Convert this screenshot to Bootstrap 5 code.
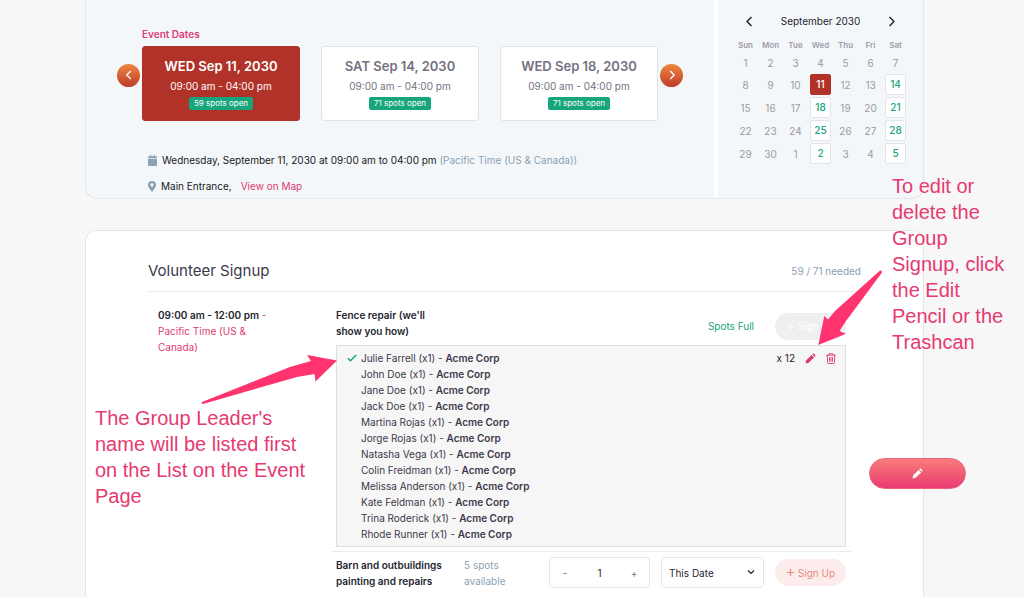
<!DOCTYPE html>
<html lang="en">
<head>
<meta charset="utf-8">
<meta name="viewport" content="width=device-width, initial-scale=1">
<title>Volunteer Signup</title>
<link href="https://cdn.jsdelivr.net/npm/bootstrap@5.3.0/dist/css/bootstrap.min.css" rel="stylesheet">
<style>
  :root { --pink: #dc3a72; --note: #e63a70; --brick: #b03228; --green: #17a57b; --slate: #8aa1b4; --ink: #24252f; --plum: #3c3849; --rule: #e4e7e9; }
  body { background: #f7f7f7; color: var(--ink); font-family: Inter, "Liberation Sans", sans-serif; font-size: 10px; line-height: 16px; }
  a { color: var(--pink); text-decoration: none; }
  button, select, input { font-family: inherit; font-size: 10px; }
  svg { display: block; }
  .page { min-height: 100vh; padding: 0 100px 0 85px; overflow: hidden; }
  .panel { border: 1px solid var(--rule); }
  .panel-event { background: #f4f7f9; border-top: 0; border-radius: 0 0 12px 12px; margin-bottom: 31px; }
  .panel-signup { background: #fff; border-bottom: 0; border-radius: 12px 12px 0 0; padding: 28px 62px 0; }
  .event-info { padding: 26px 31px 4px 31px; }
  .event-label { color: #df3a79; font-weight: 600; margin-left: 25px; margin-bottom: 4px; }
  .dates { gap: 21px; }
  .carousel-gap { gap: 2px; }
  .arrow-btn { width: 23px; height: 23px; border: 0; border-radius: 50%; padding: 0; background: linear-gradient(#ee8740, #bf3b2a); color: #fff; flex: none; margin-bottom: 17px; }
  .date-card { flex: 1 1 0; background: #fff; border: 1px solid #e1e3e8; border-radius: 3px; color: #74717f; height: 75px; padding: 9px 0 0; }
  .date-card.chosen { background: var(--brick); border-color: var(--brick); color: #fff; }
  .date-title { font-size: 13px; font-weight: 600; line-height: 20px; }
  .date-time { line-height: 21px; }
  .spots { background: var(--green); color: #fff; font-size: 8px; line-height: 13px; border-radius: 2px; padding: 0 5px; }
  .facts { margin: 31px 0 0 31px; gap: 10px; }
  .facts-item { gap: 5px; color: #17181c; }
  .slate { color: var(--slate); }
  .green { color: var(--green); }
  .event-cal { width: 209px; border-left: 4px solid #fff; padding: 13px 15px 0; flex: none; }
  .cal-btn { border: 0; background: none; padding: 0; color: #20222c; }
  .cal-head { padding: 0 11px; }
  .cal { width: 175px; margin-top: 8px; text-align: center; table-layout: fixed; color: #9a9ba1; }
  .cal th { font-size: 8px; font-weight: 600; color: #a09bae; height: 16px; padding: 0; }
  .cal td { height: 23px; padding: 0; }
  .cal tbody tr:first-child td { height: 20px; }
  .day { display: block; width: 21px; line-height: 19px; margin: 0 auto; border: 1px solid #e3e3eb; border-radius: 2px; background: #fff; color: var(--green); font-weight: 500; }
  .day.chosen { background: var(--brick); border-color: var(--brick); color: #fff; }
  .signup-head { border-bottom: 1px solid #ececef; padding-bottom: 9px; }
  .signup-title { font-size: 15px; line-height: 23px; color: var(--plum); font-weight: 400; }
  .slot-time { width: 184px; padding: 15px 50px 0 10px; flex: none; color: var(--pink); }
  .strong-ink { color: var(--ink); font-weight: 600; }
  .slots { margin-right: 10px; }
  .slot-row { padding: 0 5px 0 4px; min-height: 53px; }
  .slot-name { width: 112px; flex: none; }
  .slot-top { padding-top: 15px; }
  .slot-next { border-top: 1px solid #ececef; margin-top: 4px; padding-top: 5px; }
  .controls { gap: 11px; }
  .status { margin-right: 21px; }
  .pill { width: 71px; height: 27px; border: 0; border-radius: 14px; padding: 0; gap: 3px; background: #fdecec; color: #e68980; }
  .pill:disabled { background: #efeff2; color: #fff; }
  .people { background: #f6f6f7; border: 1px solid #dfdfe2; margin: 0 5px 0 4px; padding: 4px 9px 4px 10px; color: var(--plum); }
  .people-list b { font-weight: 600; }
  .people-actions { gap: 10px; color: var(--ink); }
  .icon-btn { border: 0; background: none; padding: 0; color: var(--pink); }
  .stepper { width: 101px; height: 31px; border: 1px solid var(--rule); border-radius: 4px; background: #fff; }
  .stepper button { border: 0; background: none; color: #777; width: 30px; padding: 0; }
  .stepper input { border: 0; width: 38px; padding: 0; text-align: center; color: var(--ink); background: none; }
  .scope { position: relative; width: 103px; }
  .scope select { appearance: none; width: 100%; height: 31px; border: 1px solid var(--rule); border-radius: 4px; background: #fff; padding: 0 7px; color: var(--ink); }
  .scope svg { position: absolute; right: 9px; top: 12px; pointer-events: none; }
  .note { position: absolute; font-family: "Liberation Sans", sans-serif; font-size: 20px; line-height: 26px; color: var(--note); margin: 0; }
  .note-leader { left: 95px; top: 405px; width: 218px; }
  .note-edit { right: 8px; top: 173px; width: 124px; }
  .arrow { position: absolute; fill: #ff346f; pointer-events: none; }
  .arrow-leader { left: 200px; top: 354px; }
  .arrow-edit { right: 140px; top: 268px; }
  .edit-fab { position: absolute; right: 58px; top: 458px; width: 97px; height: 31px; border: 1px solid #e9647a; border-radius: 16px; background: linear-gradient(#fa7d7b, #e93a70); color: #fff; padding: 0; }
</style>
</head>
<body>
<svg width="0" height="0" class="position-absolute" aria-hidden="true">
  <symbol id="left" viewBox="0 0 10 10"><path d="M6.8 1 2.8 5l4 4" fill="none" stroke="currentColor" stroke-width="1.300"/></symbol>
  <symbol id="right" viewBox="0 0 10 10"><path d="M3.2 1l4 4-4 4" fill="none" stroke="currentColor" stroke-width="1.300"/></symbol>
  <symbol id="plus" viewBox="0 0 10 10"><path d="M5 1v8M1 5h8" fill="none" stroke="currentColor" stroke-width="1.3"/></symbol>
  <symbol id="pencil" viewBox="0 0 12 12"><path d="M.5 11.5l.8-3.5 5.9-5.9 2.7 2.7L4 10.7zM7.9 1.4l.6-.6q.7-.6 1.4 0l1.3 1.3q.6.7 0 1.4l-.6.6z" fill="currentColor"/></symbol>
</svg>
<main class="page position-relative">
  <section class="panel panel-event d-flex">
    <div class="event-info flex-grow-1">
      <div class="event-label">Event Dates</div>
      <div class="d-flex align-items-center carousel-gap">
        <button class="arrow-btn d-flex align-items-center justify-content-center" type="button" aria-label="Previous dates"><svg width="10" height="10"><use href="#left"/></svg></button>
        <div class="dates d-flex flex-grow-1">
          <button type="button" class="date-card chosen d-flex flex-column align-items-center"><span class="date-title">WED Sep 11, 2030</span><span class="date-time">09:00 am - 04:00 pm</span><span class="spots">59 spots open</span></button>
          <button type="button" class="date-card d-flex flex-column align-items-center"><span class="date-title">SAT Sep 14, 2030</span><span class="date-time">09:00 am - 04:00 pm</span><span class="spots">71 spots open</span></button>
          <button type="button" class="date-card d-flex flex-column align-items-center"><span class="date-title">WED Sep 18, 2030</span><span class="date-time">09:00 am - 04:00 pm</span><span class="spots">71 spots open</span></button>
        </div>
        <button class="arrow-btn d-flex align-items-center justify-content-center" type="button" aria-label="Next dates"><svg width="10" height="10"><use href="#right"/></svg></button>
      </div>
      <div class="facts d-flex flex-column">
        <div class="facts-item d-flex align-items-center">
          <svg class="slate" width="9" height="11" viewBox="0 0 9 11" fill="currentColor"><path d="M2 0h1.2v1.3h2.6V0H7v1.3h1q1 0 1 1v1H0v-1q0-1 1-1h1zM0 4h9v6q0 1-1 1H1q-1 0-1-1z"/></svg>
          <span>Wednesday, September 11, 2030 at 09:00 am to 04:00 pm <span class="slate">(Pacific Time (US &amp; Canada))</span></span>
        </div>
        <div class="facts-item d-flex align-items-center">
          <svg class="slate" width="8" height="11" viewBox="0 0 8 11" fill="currentColor"><path fill-rule="evenodd" d="M4 0a4 4 0 0 1 4 4c0 2-2.4 4.8-4 7C2.400 8.800 0 6 0 4a4 4 0 0 1 4-4zm0 2.300a1.700 1.700 0 1 0 0 3.400 1.700 1.700 0 0 0 0-3.400z"/></svg>
          <span>Main Entrance,</span><a class="ms-1" href="#map">View on Map</a>
        </div>
      </div>
    </div>
    <div class="event-cal">
      <div class="cal-head d-flex justify-content-between align-items-center">
        <button class="cal-btn" type="button" aria-label="Previous month"><svg width="11" height="11"><use href="#left"/></svg></button>
        <span>September 2030</span>
        <button class="cal-btn" type="button" aria-label="Next month"><svg width="11" height="11"><use href="#right"/></svg></button>
      </div>
      <table class="cal">
        <thead><tr><th>Sun</th><th>Mon</th><th>Tue</th><th>Wed</th><th>Thu</th><th>Fri</th><th>Sat</th></tr></thead>
        <tbody>
          <tr><td>1</td><td>2</td><td>3</td><td>4</td><td>5</td><td>6</td><td>7</td></tr>
          <tr><td>8</td><td>9</td><td>10</td><td><a class="day chosen" href="#d11">11</a></td><td>12</td><td>13</td><td><a class="day" href="#d14">14</a></td></tr>
          <tr><td>15</td><td>16</td><td>17</td><td><a class="day" href="#d18">18</a></td><td>19</td><td>20</td><td><a class="day" href="#d21">21</a></td></tr>
          <tr><td>22</td><td>23</td><td>24</td><td><a class="day" href="#d25">25</a></td><td>26</td><td>27</td><td><a class="day" href="#d28">28</a></td></tr>
          <tr><td>29</td><td>30</td><td>1</td><td><a class="day" href="#o2">2</a></td><td>3</td><td>4</td><td><a class="day" href="#o5">5</a></td></tr>
        </tbody>
      </table>
    </div>
  </section>

  <section class="panel panel-signup">
    <div class="signup-head d-flex justify-content-between align-items-center">
      <h1 class="signup-title m-0">Volunteer Signup</h1>
      <span class="slate">59 / 71 needed</span>
    </div>
    <div class="d-flex">
      <div class="slot-time">
        <div class="text-nowrap"><span class="strong-ink">09:00 am - 12:00 pm</span> -</div>
        <div>Pacific Time (US &amp; Canada)</div>
      </div>
      <div class="slots flex-grow-1">
        <div class="slot-row d-flex">
          <div class="slot-name slot-top strong-ink">Fence repair (we'll show you how)</div>
          <div class="ms-auto d-flex align-items-center slot-top">
            <span class="status green">Spots Full</span>
            <button class="pill d-flex align-items-center justify-content-center" type="button" disabled><svg width="9" height="9"><use href="#plus"/></svg>Sign Up</button>
          </div>
        </div>
        <div class="people d-flex align-items-start">
          <svg class="mt-1" width="10" height="8" viewBox="0 0 10 8"><path d="M.8 4.200 3.500 6.800 9.200 1" fill="none" stroke="#17a57b" stroke-width="1.400"/></svg>
          <ul class="people-list list-unstyled m-0 ms-1 flex-grow-1">
            <li>Julie Farrell (x1) - <b>Acme Corp</b></li>
            <li>John Doe (x1) - <b>Acme Corp</b></li>
            <li>Jane Doe (x1) - <b>Acme Corp</b></li>
            <li>Jack Doe (x1) - <b>Acme Corp</b></li>
            <li>Martina Rojas (x1) - <b>Acme Corp</b></li>
            <li>Jorge Rojas (x1) - <b>Acme Corp</b></li>
            <li>Natasha Vega (x1) - <b>Acme Corp</b></li>
            <li>Colin Freidman (x1) - <b>Acme Corp</b></li>
            <li>Melissa Anderson (x1) - <b>Acme Corp</b></li>
            <li>Kate Feldman (x1) - <b>Acme Corp</b></li>
            <li>Trina Roderick (x1) - <b>Acme Corp</b></li>
            <li>Rhode Runner (x1) - <b>Acme Corp</b></li>
          </ul>
          <div class="people-actions d-flex align-items-center">
            <span>x 12</span>
            <button class="icon-btn" type="button" aria-label="Edit"><svg width="11" height="11"><use href="#pencil"/></svg></button>
            <button class="icon-btn" type="button" aria-label="Delete"><svg width="10" height="11" viewBox="0 0 10 11" fill="none" stroke="currentColor"><path d="M0 2.200h10M3 2V.7h4V2M1.300 2.500l.3 7q0 1 1 1h4.800q1 0 1-1l.3-7M3.500 4.200v4.500M5 4.200v4.500M6.500 4.200v4.500" stroke-width=".9"/></svg></button>
          </div>
        </div>
        <div class="slot-row slot-next d-flex align-items-start">
          <div class="slot-name strong-ink">Barn and outbuildings painting and repairs</div>
          <div class="slate ms-3">5 spots<br>available</div>
          <div class="controls ms-auto d-flex align-items-center">
            <div class="stepper d-flex justify-content-between align-items-center">
              <button type="button" aria-label="Fewer">-</button>
              <input type="text" value="1" aria-label="Number of spots">
              <button type="button" aria-label="More">+</button>
            </div>
            <div class="scope">
              <select aria-label="Dates to sign up for"><option>This Date</option><option>All Dates</option></select>
              <svg width="8" height="7" viewBox="0 0 8 7"><path d="M1 1.500l3 3 3-3" fill="none" stroke="#24252f" stroke-width="1.200"/></svg>
            </div>
            <button class="pill d-flex align-items-center justify-content-center" type="button"><svg width="9" height="9"><use href="#plus"/></svg>Sign Up</button>
          </div>
        </div>
      </div>
    </div>
  </section>

  <p class="note note-leader">The Group Leader's name will be listed first on the List on the Event Page</p>
  <p class="note note-edit">To edit or delete the Group Signup, click the Edit Pencil or the Trashcan</p>
  <svg class="arrow arrow-leader" width="138" height="52" viewBox="200 354 138 52"><path d="M202 402 L290 367 L311 361 L307 355 L337 360.500 L315.500 381.500 L314.500 374 L297 377 L203 404 Q201 404 202 402z"/></svg>
  <svg class="arrow arrow-edit" width="68" height="80" viewBox="816 268 68 80"><path d="M880 270.500 L835 311 L828 319.500 L824.300 316 L818.300 345 L846 333.700 L839.500 331 L846 321 L882 272.500 Q882 270 880 270.500z"/></svg>
  <button class="edit-fab d-flex align-items-center justify-content-center" type="button" aria-label="Edit event"><svg width="11" height="11"><use href="#pencil"/></svg></button>
</main>
<script src="https://cdn.jsdelivr.net/npm/bootstrap@5.3.0/dist/js/bootstrap.bundle.min.js"></script>
</body>
</html>
